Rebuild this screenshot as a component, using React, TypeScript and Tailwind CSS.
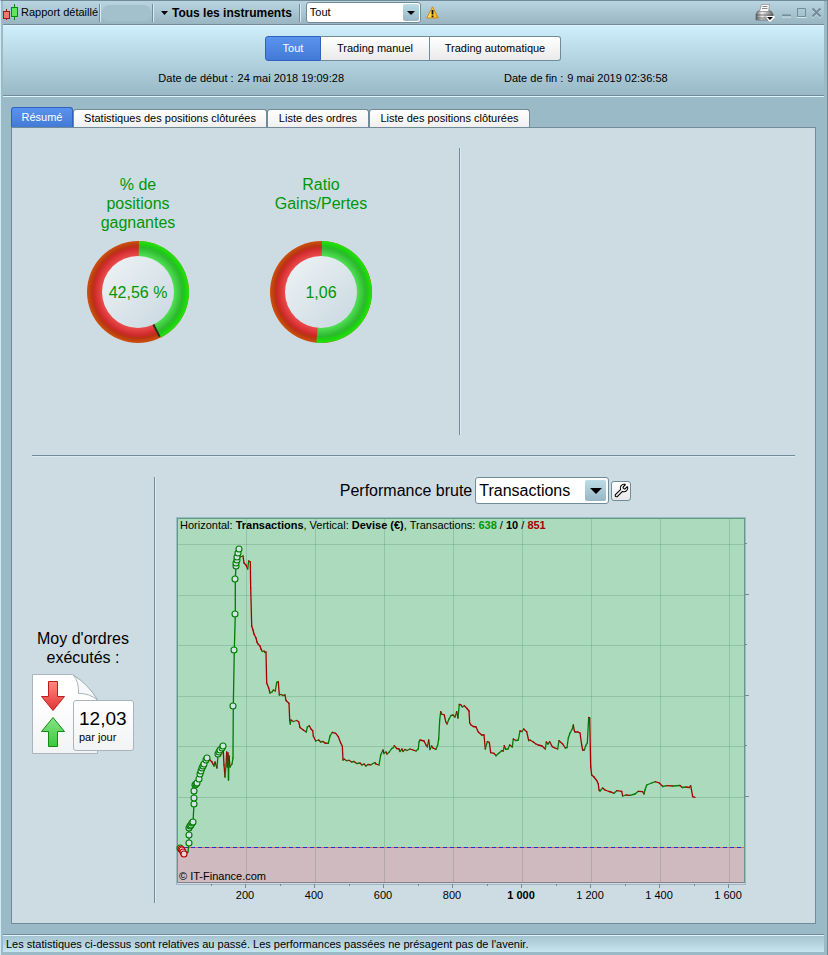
import { useState } from "react";
import type { ReactNode } from "react";
import { Wrench } from "lucide-react";
import clsx from "clsx";

type Point = [number, number];

const GREEN = "#007d00";
const RED = "#a80000";

const modes = ["Tout", "Trading manuel", "Trading automatique"];
const tabs = ["Résumé", "Statistiques des positions clôturées", "Liste des ordres", "Liste des positions clôturées"];

// gross performance curve, rising segments are green and falling ones red
const curve: Point[] = [
  [8, 337], [11, 338], [14, 345], [16, 344], [18, 342], [19, 333], [19, 325], [19, 317], [21, 315], [23, 312],
  [24, 294], [24, 288], [24, 281], [25, 275], [27, 273], [29, 269], [31, 263], [33, 257], [35, 252], [37, 248],
  [40, 250], [42, 252], [43, 254], [44, 256], [45, 252], [47, 258], [47.5, 252], [48, 244], [50, 241], [53, 236],
  [54, 255], [55, 267], [56, 255], [56.7, 242], [57.3, 257], [58, 243], [58.5, 270], [59, 246], [60, 257],
  [62, 254], [63, 248], [63.3, 196], [64.3, 140], [65.3, 104], [65.3, 69], [66, 56], [67, 48], [68, 43], [69, 40],
  [70, 47], [73, 46], [74, 53], [76, 55], [77.7, 59], [78.7, 51], [80.3, 52], [80.7, 78], [81.7, 116], [83, 120],
  [84, 124], [86, 128], [87, 132], [88, 134], [90, 136], [91, 139], [92.3, 141.5], [94, 141], [95, 142.5],
  [96, 142], [96.7, 173], [98.7, 178], [100, 183], [102, 182], [103.3, 180], [105.3, 181], [106.7, 172.3],
  [108.3, 171.7], [109.3, 185], [111, 184.5], [113, 185.5], [115, 185], [116, 190.5], [119, 193.3], [119.7, 210],
  [120.3, 214], [121, 210], [123.3, 211.5], [126.7, 210.5], [128.7, 211.7], [130, 217.5], [133.3, 220],
  [136.3, 222], [137.3, 217], [139.3, 215.7], [141, 219], [142.7, 220.7], [143.3, 226], [145.7, 231],
  [148.7, 230], [150.7, 232], [153, 231.5], [155, 233], [158.3, 233.3], [160, 226], [162.3, 222.3],
  [165.7, 223.3], [168.3, 226.7], [170.7, 233], [172.3, 236], [173, 250], [174, 249], [176.7, 250.7],
  [179, 250.3], [181.7, 252], [184, 251.5], [186.7, 253.5], [190, 253], [192, 255], [194, 254], [196, 256],
  [198, 254.5], [201, 254.8], [203, 253.5], [205, 252.7], [206, 254], [209, 255], [210.7, 245], [213, 240],
  [214, 243.5], [216, 242], [217, 244], [219.3, 242], [221.7, 238.5], [223, 238], [224.3, 235.7], [226.7, 238.5],
  [229, 239], [230, 241.5], [232, 239], [233, 241.5], [235, 239.5], [237, 240.5], [240, 239], [243, 240],
  [246, 241], [248.3, 239], [249, 232], [250, 230], [254, 231], [256, 235], [257.3, 237], [258.7, 230],
  [260, 239.5], [261.7, 236], [263, 238], [266, 239.3], [267.7, 235], [268.7, 229], [269.7, 210], [270.7, 201.7],
  [271.7, 204], [274.3, 205], [275.7, 211.7], [277, 214], [279, 209], [281, 205.5], [283, 205], [285, 207],
  [286.7, 201.7], [288, 208], [289.3, 194.3], [291, 195], [292.3, 197], [294.3, 195.7], [297, 198.5],
  [299, 201], [299.7, 213], [301, 215], [303.3, 216.5], [306, 217], [308.3, 222], [311.7, 225], [314, 225],
  [315.3, 239], [317.3, 231.7], [319.3, 232.3], [320.7, 242.7], [324, 243.3], [326, 245.7], [329.3, 242.7],
  [331.7, 240.7], [333.3, 241], [334.3, 235.7], [335.7, 239.3], [338, 239], [339.7, 235], [342.3, 237],
  [343.3, 229], [346, 230.5], [348.3, 230], [350, 221], [352, 221.5], [353.7, 219], [356.7, 221.7],
  [358.7, 230.7], [360, 230], [363.3, 232], [366, 234], [368.3, 235], [372, 236], [375.3, 239], [376.3, 232],
  [378, 234], [379.7, 231.7], [382.3, 236.7], [385, 238], [387.7, 239], [389, 230.7], [392.7, 234],
  [395.3, 238], [397, 237.7], [398.3, 228], [400, 223], [402.3, 219], [403.3, 215], [404.3, 220.5],
  [405, 222], [408, 222], [410, 223], [411.7, 235], [412.7, 240], [414.3, 240], [415.7, 235.7], [417.3, 233],
  [418.7, 207.5], [419.7, 208], [420.7, 256.7], [421.7, 265], [424, 267], [426.7, 270.5], [428.3, 274],
  [429, 280], [430, 281], [432.7, 278], [435, 280], [439, 281.5], [441, 282], [444, 283.3], [446.7, 280.7],
  [451.7, 281.3], [452.7, 286], [456, 285], [460, 285.3], [465, 284], [468.3, 281.3], [472.7, 281.7],
  [474, 284], [475, 280], [476.7, 275], [481.7, 273], [485.3, 271.7], [489.3, 273], [492.7, 276.5],
  [496.7, 275.7], [503, 276], [510, 275.5], [512.3, 277.5], [516, 277], [519.3, 277.5], [520.7, 275.7],
  [522.7, 286.7], [525, 287.3],
];

const highs: Point[] = [
  [10, 338], [19, 333], [19, 325], [19, 318], [20, 316], [21, 315], [22, 313], [23, 312], [24, 294], [24, 288],
  [24, 281], [25, 275], [26, 274], [27, 273], [29, 269], [30, 264], [31, 261], [32, 258], [33, 256], [34, 254],
  [36, 250], [37, 248], [48, 244], [49, 242], [50, 240], [52, 238], [53, 236], [63, 196], [64, 140], [65, 104],
  [65, 69], [66, 56], [66, 53], [67, 50], [67, 47], [68, 43], [69, 39],
];

const lows: Point[] = [[11, 339], [12, 340], [13, 342], [14, 344]];

const xTicks = [
  { x: 76, label: "200" },
  { x: 145, label: "400" },
  { x: 214, label: "600" },
  { x: 283, label: "800" },
  { x: 352, label: "1 000", bold: true },
  { x: 421, label: "1 200" },
  { x: 490, label: "1 400" },
  { x: 559, label: "1 600" },
];
const yTicks = [34, 85, 135, 186, 236, 287];

function VLine({ className }: { className?: string }) {
  return <span className={clsx("shrink-0 border-l border-r border-l-[#728b98] border-r-[#dcebf1]", className)} />;
}

type PickerProps = { label: string; options: string[]; className: string; arrowClass: string; arrow: number };

function Picker({ label, options, className, arrowClass, arrow }: PickerProps) {
  return (
    <span className="relative inline-flex shrink-0">
      <select
        aria-label={label}
        className={clsx("appearance-none rounded-[3px] border border-[#728b98] bg-white outline-none", className)}
      >
        {options.map((option) => (
          <option key={option}>{option}</option>
        ))}
      </select>
      <span
        className={clsx(
          "pointer-events-none absolute flex items-center justify-center rounded-[2px] bg-linear-to-b from-[#bcdce8] to-[#98b7c4]",
          arrowClass,
        )}
      >
        <svg width={arrow} height={arrow / 2} viewBox="0 0 10 5">
          <path d="M0 0h10L5 5z" />
        </svg>
      </span>
    </span>
  );
}

function CandlesIcon() {
  return (
    <svg width="16" height="17" viewBox="0 0 16 17" className="shrink-0" shapeRendering="crispEdges">
      <path d="M3.5 5v11" stroke="#a01818" />
      <rect x="0.5" y="7.500" width="6" height="7" fill="#ee7777" stroke="#a01818" />
      <path d="M11.500 0v16" stroke="#0a8a0a" />
      <rect x="8.500" y="3.500" width="6" height="9" fill="#5ce65c" stroke="#0a8a0a" />
    </svg>
  );
}

function WarningIcon() {
  return (
    <svg width="13" height="13" viewBox="0 0 13 13" className="shrink-0">
      <defs>
        <linearGradient id="warn" x1="0" x2="1">
          <stop offset="0.3" stopColor="#ffe04a" />
          <stop offset="1" stopColor="#f0a800" />
        </linearGradient>
      </defs>
      <path d="M6.500 0.800 12.300 12H0.700z" fill="url(#warn)" stroke="#c98a1c" strokeLinejoin="round" />
      <path d="M6.500 4v4.500M6.500 9.500v1.700" stroke="#111" strokeWidth="1.800" />
    </svg>
  );
}

function PrinterIcon() {
  return (
    <svg width="20" height="18" viewBox="0 0 20 18">
      <defs>
        <linearGradient id="printer" x1="0" x2="1">
          <stop offset="0" stopColor="#666" />
          <stop offset="0.350" stopColor="#eee" />
          <stop offset="1" stopColor="#666" />
        </linearGradient>
      </defs>
      <path d="M3 7h13l2 3v6H1v-6z" fill="url(#printer)" stroke="#666" strokeWidth="0.800" />
      <path d="M6.500 0.500h8l-1 7h-9z" fill="#fff" stroke="#888" strokeWidth="0.700" />
      <path d="M7.500 2.500h5M7 4.500h5.500" stroke="#888" />
      <path d="M1 11h17M1 14h17" stroke="#555" strokeWidth="0.800" />
      <path d="M11.500 12h8v2L16 17.500h-2L11.500 14z" fill="#fff" />
      <path d="M12 13h6l-3 3z" />
    </svg>
  );
}

function WindowButton({ label, children }: { label: string; children: ReactNode }) {
  return (
    <button type="button" aria-label={label}>
      <svg width="11" height="11" viewBox="0 0 11 11" fill="none">
        {children}
      </svg>
    </button>
  );
}

// share is the green part of the ring, clockwise from the top
function Gauge({ title, value, share, marker }: { title: string[]; value: string; share: number; marker?: boolean }) {
  const angle = share * 2 * Math.PI;
  const dx = Math.sin(angle);
  const dy = -Math.cos(angle);
  const large = share > 0.5 ? 1 : 0;

  return (
    <div className="flex w-[102px] flex-col items-center">
      <p className="h-[57px] text-center text-base leading-[19px] text-[#009608]">
        {title.map((line) => (
          <span key={line} className="block">
            {line}
          </span>
        ))}
      </p>
      <div className="relative mt-[9px] flex size-[102px] items-center justify-center">
        <svg viewBox="0 0 102 102" className="absolute inset-0">
          <defs>
            <radialGradient id="ring-red" gradientUnits="userSpaceOnUse" cx="51" cy="51" r="51">
              <stop offset="0.700" stopColor="#ee4c4c" />
              <stop offset="0.860" stopColor="#cc2a2a" />
              <stop offset="0.900" stopColor="#b83410" />
              <stop offset="1" stopColor="#cc5210" />
            </radialGradient>
            <radialGradient id="ring-green" gradientUnits="userSpaceOnUse" cx="51" cy="51" r="51">
              <stop offset="0.700" stopColor="#52e056" />
              <stop offset="0.870" stopColor="#2cb92e" />
              <stop offset="0.920" stopColor="#1ecc14" />
              <stop offset="1" stopColor="#22e60c" />
            </radialGradient>
            <linearGradient id="ring-hole" x1="0" y1="0" x2="1" y2="1">
              <stop offset="0.100" stopColor="#ebf1f4" />
              <stop offset="0.900" stopColor="#ccdae2" />
            </linearGradient>
          </defs>
          <circle cx="51" cy="51" r="51" fill="url(#ring-red)" />
          <path
            d={`M51 51L52 0A51 51 0 ${large} 1 ${51 + 51 * dx} ${51 + 51 * dy}Z`}
            fill="url(#ring-green)"
          />
          {marker && (
            <path d={`M50 51L${50 + 50 * dx} ${51 + 50 * dy}`} stroke="#263024" strokeWidth="2" />
          )}
          <circle cx="51" cy="51" r="36" fill="url(#ring-hole)" />
        </svg>
        <span className="relative pt-0.5 text-base text-[#009608]">{value}</span>
      </div>
    </div>
  );
}

function OrdersPerDay() {
  return (
    <div className="relative h-20 w-[102px]">
      <svg width="102" height="80" viewBox="0 0 102 80" strokeLinejoin="round">
        <defs>
          <linearGradient id="sheet" x1="0" y1="0" x2="0" y2="1">
            <stop offset="0.300" stopColor="#fff" />
            <stop offset="1" stopColor="#f2f3f4" />
          </linearGradient>
          <linearGradient id="arrow-down" x1="0" y1="0" x2="0" y2="1">
            <stop offset="0" stopColor="#ff8a80" />
            <stop offset="1" stopColor="#e23434" />
          </linearGradient>
          <linearGradient id="arrow-up" x1="0" y1="0" x2="0" y2="1">
            <stop offset="0" stopColor="#86e486" />
            <stop offset="1" stopColor="#3cc83c" />
          </linearGradient>
        </defs>
        <path d="M0.500 0.500h40q14 8 25 25v54H0.500z" fill="url(#sheet)" stroke="#a8b5bd" />
        <path d="M41 1q6 6 5.500 18.500Q57 19 65.500 26 56 10 41 1z" fill="#f6f8f9" stroke="#a8b5bd" />
        <path d="M16.500 7.500h9v15h7L21 36.500 9.500 22.500h7z" fill="url(#arrow-down)" stroke="#c01c1c" />
        <path d="M16.500 72.500h9v-15h7L21 43.500 9.500 57.500h7z" fill="url(#arrow-up)" stroke="#128a12" />
      </svg>
      <div className="absolute top-[26px] left-[41px] flex h-[51px] w-[61px] flex-col rounded-[3px] border border-[#a8b5bd] bg-linear-to-b from-white to-[#f2f3f4] pt-2 pl-[5px]">
        <span className="text-[19px] leading-5">12,03</span>
        <span className="leading-[17px]">par jour</span>
      </div>
    </div>
  );
}

function PerformanceChart() {
  return (
    <svg viewBox="0 0 585 393" className="block w-full text-[11px]">
      <rect x="7" y="8" width="567" height="329" fill="#abdabc" />
      <rect x="7" y="337" width="567" height="36" fill="#cfbac0" />
      <g stroke="#004d26" strokeOpacity="0.150" shapeRendering="crispEdges">
        {xTicks.map(({ x }) => (
          <path key={x} d={`M${x + 0.5} 8V373`} />
        ))}
        {yTicks.map((y) => (
          <path key={y} d={`M7 ${y + 0.5}H574`} />
        ))}
      </g>
      <path d="M7 337.500H574" stroke="#d86a66" shapeRendering="crispEdges" />
      <path d="M7 337.500H574" stroke="#2430d0" strokeDasharray="4 3" shapeRendering="crispEdges" />
      <g fill="none" shapeRendering="crispEdges">
        <path d="M6.500 374.500V7.500H575.500V374.500z" stroke="#9fb9c6" />
        <path d="M7.500 373V8.500H574.500V373" stroke="#5f9c80" />
        <path d="M7 372.500H575" stroke="#8d7f89" />
      </g>
      <g stroke="#728b98" shapeRendering="crispEdges">
        {xTicks.map(({ x }) => (
          <path key={x} d={`M${x - 0.5} 374v4M${x - 34.5} 374v2`} />
        ))}
        <path d="M524.500 374v2" />
        {yTicks.map((y, i) => (
          <path key={y} d={`M575 ${y - 0.5}h${i % 2 ? 4 : 2}`} />
        ))}
      </g>

      <g strokeWidth="1.300" strokeLinecap="round">
        {curve.slice(1).map(([x, y], i) => {
          const [px, py] = curve[i];
          return <path key={i} d={`M${px} ${py}L${x} ${y}`} stroke={y < py ? GREEN : RED} />;
        })}
      </g>
      <g fill="#d3e3e6" stroke={GREEN} strokeWidth="1.100">
        {highs.map(([x, y], i) => (
          <circle key={i} cx={x} cy={y} r="3" />
        ))}
      </g>
      <g fill="#e3d6dc" stroke="#b80000" strokeWidth="1.100">
        {lows.map(([x, y], i) => (
          <circle key={i} cx={x} cy={y} r="3" />
        ))}
      </g>

      <text x="10" y="19">
        Horizontal: <tspan fontWeight="bold">Transactions</tspan>, Vertical: <tspan fontWeight="bold">Devise (€)</tspan>,
        Transactions:{" "}
        <tspan fontWeight="bold" fill="#009608">
          638
        </tspan>{" "}
        / <tspan fontWeight="bold">10</tspan> /{" "}
        <tspan fontWeight="bold" fill={RED}>
          851
        </tspan>
      </text>
      <text x="9" y="370">
        © IT-Finance.com
      </text>
      {xTicks.map(({ x, label, bold }) => (
        <text key={x} x={x - 1} y="389" textAnchor="middle" fontWeight={bold ? "bold" : "normal"}>
          {label}
        </text>
      ))}
    </svg>
  );
}

export default function App() {
  const [mode, setMode] = useState(modes[0]);
  const [tab, setTab] = useState(tabs[0]);

  return (
    <div className="flex min-h-screen flex-col border-x border-t border-t-[#728b98] border-r-[#728b98] border-l-[#d2eaf4] bg-[#9bbac7] pr-[3px] pb-[3px] pl-0.5 font-['Liberation_Sans',Arial,sans-serif] text-[11px] text-black">
      <div className="flex h-6 items-center border-b border-[#728b98] bg-linear-to-b from-[#bad5e1] to-[#98b5c1]">
        <CandlesIcon />
        <span className="ml-0.5 w-[78px] whitespace-nowrap">Rapport détaillé</span>
        <VLine className="h-[18px]" />
        <span className="mx-px h-4 w-[49px] rounded-full bg-[#a3c1cd]" />
        <VLine className="h-[18px]" />
        <button type="button" className="ml-[7px] flex items-center gap-1 text-xs font-bold whitespace-nowrap">
          <svg width="7" height="4" viewBox="0 0 7 4">
            <path d="M0 0h7L3.500 4z" />
          </svg>
          Tous les instruments
        </button>
        <VLine className="ml-[7px] h-[18px]" />
        <span className="ml-[5px] flex">
          <Picker
            label="Instrument"
            options={["Tout"]}
            className="h-[21px] w-[115px] pl-[3px]"
            arrowClass="top-0.5 right-0.5 h-[17px] w-4"
            arrow={8}
          />
        </span>
        <span className="ml-[5px] flex">
          <WarningIcon />
        </span>
        <div className="ml-auto flex items-center gap-1 pr-0.5">
          <button type="button" aria-label="Imprimer" className="mr-0.5">
            <PrinterIcon />
          </button>
          <WindowButton label="Réduire">
            <path d="M1 8.500h9" stroke="#728b98" strokeWidth="2" />
            <path d="M1 10h9" stroke="#d8e8ef" />
          </WindowButton>
          <WindowButton label="Agrandir">
            <path d="M1 10.500h9.500" stroke="#d8e8ef" />
            <path d="M1.500 1.500h8v8h-8z" stroke="#728b98" />
          </WindowButton>
          <WindowButton label="Fermer">
            <path d="M1.500 2.500l8 8M9.500 2.500l-8 8" stroke="#d8e8ef" strokeWidth="1.500" />
            <path d="M1.500 1.500l8 8M9.500 1.500l-8 8" stroke="#728b98" strokeWidth="2" />
          </WindowButton>
        </div>
      </div>

      <header className="flex h-[71px] flex-col items-center border-t border-b border-t-[#dff3fb] border-b-[#728b98] bg-linear-to-b from-[#ceeefb] to-[#9ab9c6] pt-2.5 pr-px">
        <div className="flex">
          {modes.map((name, i) => (
            <button
              key={name}
              type="button"
              onClick={() => setMode(name)}
              className={clsx(
                "h-[25px] border",
                i === 0 ? "w-14 rounded-l-[3px]" : "border-l-0",
                i === 1 && "w-[109px]",
                i === 2 && "w-[131px] rounded-r-[3px]",
                mode === name
                  ? "border-[#2d62c0] bg-linear-to-b from-[#5a93ee] to-[#437ad6] text-white"
                  : "border-[#728b98] bg-linear-to-b from-white to-[#eaeaea]",
              )}
            >
              {name}
            </button>
          ))}
        </div>
        <dl className="mt-[9px] flex gap-40 leading-4">
          <div className="flex gap-1">
            <dt>Date de début :</dt>
            <dd>24 mai 2018 19:09:28</dd>
          </div>
          <div className="flex gap-1">
            <dt>Date de fin :</dt>
            <dd>9 mai 2019 02:36:58</dd>
          </div>
        </dl>
      </header>

      <main className="flex flex-1 flex-col border-t border-[#dff3fb] px-2 pt-2.5 pb-2.5">
        <nav className="flex items-end" role="tablist">
          {tabs.map((name, i) => (
            <button
              key={name}
              type="button"
              role="tab"
              aria-selected={tab === name}
              onClick={() => setTab(name)}
              className={clsx(
                "rounded-t-[3px] border border-b-0 whitespace-nowrap",
                ["w-[62px]", "w-[194px]", "w-[102px]", "w-[161px]"][i],
                tab === name
                  ? "h-5 border-[#2d62c0] bg-linear-to-b from-[#5a93ee] to-[#437ad6] text-white"
                  : "h-[18px] border-[#728b98] bg-linear-to-b from-white to-[#f0f0f0]",
              )}
            >
              {name}
            </button>
          ))}
        </nav>

        <div className="flex flex-1 flex-col border border-[#728b98] bg-[#cddce3] px-5">
          <section className="flex py-5">
            <div className="flex flex-1 gap-[81px] pt-[27px] pl-[55px]">
              <Gauge title={["% de", "positions", "gagnantes"]} value="42,56 %" share={0.4256} marker />
              <Gauge title={["Ratio", "Gains/Pertes"]} value="1,06" share={0.5146} />
            </div>
            <VLine className="h-[287px]" />
            <div className="w-[334px]" />
          </section>
          <hr className="border-t border-b border-t-[#728b98] border-b-[#dcebf1]" />
          <section className="-mx-5 flex flex-1 py-5">
            <div className="flex w-[142px] shrink-0 flex-col items-center justify-center pt-0.5">
              <h2 className="mb-[7px] text-center text-base leading-[19px]">
                Moy d'ordres
                <br />
                exécutés :
              </h2>
              <OrdersPerDay />
            </div>
            <VLine />
            <div className="flex-1">
              <div className="flex items-center justify-center">
                <h2 className="text-base leading-[27px]">Performance brute</h2>
                <span className="ml-[3px] flex">
                  <Picker
                    label="Axe horizontal"
                    options={["Transactions"]}
                    className="h-[27px] w-[134px] pl-[3px] text-base"
                    arrowClass="top-[3px] right-[3px] h-[21px] w-[21px]"
                    arrow={12}
                  />
                </span>
                <button
                  type="button"
                  aria-label="Configurer"
                  className="ml-0.5 flex size-5 items-center justify-center rounded-[3px] border border-[#728b98] bg-linear-to-b from-white to-[#e8e8e8]"
                >
                  <Wrench size={15} strokeWidth={1.75} />
                </button>
              </div>
              <div className="mt-1.5 mr-15 ml-3.5">
                <PerformanceChart />
              </div>
            </div>
          </section>
        </div>
      </main>

      <footer className="border-t border-[#728b98]">
        <p className="border-t border-[#dff3fb] bg-linear-to-b from-[#a6c4d0] to-[#c6e5f1] pl-[3px] leading-4">
          Les statistiques ci-dessus sont relatives au passé. Les performances passées ne présagent pas de l'avenir.
        </p>
      </footer>
    </div>
  );
}
